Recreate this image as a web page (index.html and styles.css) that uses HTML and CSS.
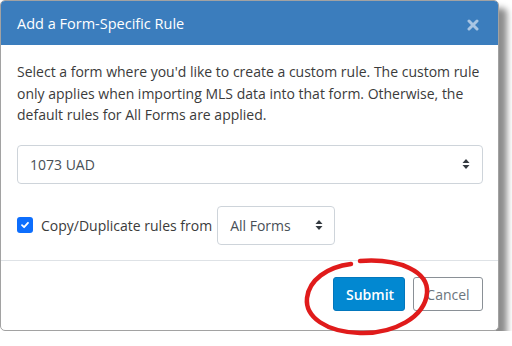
FILE: index.html
```html
<!DOCTYPE html>
<html lang="en">
<head>
    <meta charset="UTF-8">
    <title>Add a Form-Specific Rule</title>
    <link rel="stylesheet" href="styles.css">
</head>
<body>

    <div class="modal">
        <div class="modal-header">
            <span class="modal-title">Add a Form-Specific Rule</span>
            <svg class="close" width="12" height="12" viewBox="0 0 12 12">
                <path d="M2 2 L10 10 M10 2 L2 10" stroke="#a9c5e3" stroke-width="3" stroke-linecap="round"/>
            </svg>
        </div>

        <div class="modal-body">
            <p>Select a form where you'd like to create a custom rule. The custom rule only applies when importing MLS data into that form. Otherwise, the default rules for All Forms are applied.</p>

            <div class="select select-wide">
                <span>1073 UAD</span>
                <svg class="caret" width="8" height="12" viewBox="0 0 8 12">
                    <path d="M0.5 5 L4 1 L7.5 5 Z M0.5 7 L4 11 L7.5 7 Z" fill="#343a40"/>
                </svg>
            </div>

            <div class="copy-row">
                <span class="checkbox">
                    <svg width="10" height="10" viewBox="0 0 10 10">
                        <path d="M2 5.2 L4.1 7.2 L8 2.8" stroke="#fff" stroke-width="1.8" fill="none" stroke-linecap="round" stroke-linejoin="round"/>
                    </svg>
                </span>
                <label>Copy/Duplicate rules from</label>
                <div class="select select-small">
                    <span>All Forms</span>
                    <svg class="caret" width="8" height="12" viewBox="0 0 8 12">
                        <path d="M0.5 5 L4 1 L7.5 5 Z M0.5 7 L4 11 L7.5 7 Z" fill="#343a40"/>
                    </svg>
                </div>
            </div>
        </div>

        <div class="modal-footer">
            <button class="btn btn-submit">Submit</button>
            <button class="btn btn-cancel">Cancel</button>
        </div>
    </div>

    <!-- odręczne kółko wokół przycisku -->
    <svg class="scribble" width="140" height="90" viewBox="300 252 140 90">
        <path d="M360 261 C 400 258, 429 272, 427 293 C 425 317, 394 334, 360 333 C 326 332, 305 317, 307 298 C 309 280, 327 267, 351 264"
              stroke="#e01b1b" stroke-width="4.5" fill="none" stroke-linecap="round"/>
    </svg>

</body>
</html>
```

FILE: styles.css
```css
body {
    margin: 0;
    background: #ffffff;
    font-family: "Open Sans", "Liberation Sans", sans-serif;
    color: #212529;
}

.modal {
    width: 497px;
    height: 329px;
    border: 1px solid #a2a2a2;
    border-radius: 5px;
    background: #ffffff;
    box-shadow: 8px 8px 6px rgba(0, 0, 0, 0.45);
    display: flex;
    flex-direction: column;
    overflow: hidden;
}

.modal-header {
    height: 44px;
    background-color: #3b7dbd;
    display: flex;
    align-items: center;
    justify-content: space-between;
    padding: 0 19px 0 16px;
}

.modal-title {
    color: #ffffff;
    font-size: 14.5px;
    font-weight: 500;
}

.close {
    margin-top: 3px;
}

.modal-body {
    padding: 16px 16px 15px 16px;
    border-bottom: 1px solid #dee2e6;
}

.modal-body p {
    margin: 0 0 19px 0;
    font-size: 14px;
    line-height: 21.5px;
    color: #3b3b3b;
}

.select {
    height: 37px;
    border: 1px solid #ced4da;
    border-radius: 4px;
    display: flex;
    align-items: center;
    justify-content: space-between;
    padding: 0 12px;
    font-size: 14px;
    color: #495057;
}

.select-wide {
    width: 440px;
}

.select-small {
    width: 93px;
    padding-right: 11px;
}

.copy-row {
    display: flex;
    align-items: center;
    margin-top: 22px;
}

.checkbox {
    width: 16px;
    height: 16px;
    border-radius: 3px;
    background-color: #0d6efd;
    display: flex;
    align-items: center;
    justify-content: center;
    margin-right: 8px;
}

.copy-row label {
    font-size: 14px;
    color: #3b3b3b;
    margin-right: 5px;
}

.modal-footer {
    flex: 1;
    display: flex;
    justify-content: flex-end;
    align-items: center;
    gap: 8px;
    padding: 0 15px 2px 0;
}

.btn {
    height: 34px;
    border-radius: 3px;
    font-family: "Open Sans", "Liberation Sans", sans-serif;
    font-size: 14px;
    padding: 0 12px;
}

.btn-submit {
    width: 72px;
    background-color: #0288d1;
    border: 1px solid #0277bd;
    color: #ffffff;
    font-weight: 600;
}

.btn-cancel {
    width: 70px;
    background-color: #ffffff;
    border: 1px solid #8a9096;
    color: #6c757d;
}

.scribble {
    position: absolute;
    left: 300px;
    top: 252px;
}
```
